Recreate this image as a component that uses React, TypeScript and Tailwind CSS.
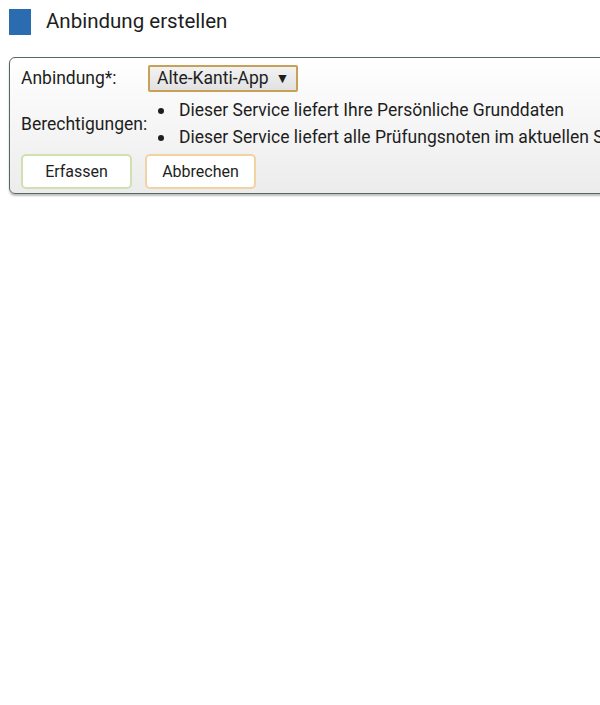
const App = () => {
  const rights = [
    'Dieser Service liefert Ihre Persönliche Grunddaten',
    'Dieser Service liefert alle Prüfungsnoten im aktuellen Semester',
  ];
  return (
    <div className="w-[600px] h-[705px] overflow-hidden bg-white font-['Roboto',sans-serif] text-[#1e1e1e]">
      <div className="flex items-center pl-[9px] pt-[8px] h-[35px]">
        <div className="w-[22px] h-[26px] bg-[#2b6cb0]" />
        <h1 className="ml-[15px] text-[20.5px] leading-none">Anbindung erstellen</h1>
      </div>
      <div className="ml-[9px] mt-[22px] w-max whitespace-nowrap rounded-[6px] border border-[#56695f] bg-gradient-to-b from-white to-[#ececec] pl-[11px] pr-4 pt-[7px] pb-[4px] text-[17.5px] shadow-[0_2px_2px_rgba(0,0,0,0.25)]">
        <div className="flex h-[27px] items-center">
          <span className="w-[127px]">Anbindung*:</span>
          <button className="flex h-[27px] items-center rounded-[2px] border-2 border-[#c9a057] bg-gradient-to-b from-[#f2f2f2] to-[#e2e2e2] px-[7px] text-[17.5px]">
            Alte-Kanti-App <span className="ml-[7px] text-[14px]">▼</span>
          </button>
        </div>
        <div className="flex items-center h-[60px] mt-[2px]">
          <span className="w-[127px]">Berechtigungen:</span>
          <ul className="leading-[27px]">
            {rights.map((r) => (
              <li key={r} className="flex items-center">
                <span className="ml-[10px] mr-[15px] h-[6px] w-[6px] rounded-full bg-[#1e1e1e]" />
                {r}
              </li>
            ))}
          </ul>
        </div>
        <div className="flex gap-[13px]">
          <button className="h-[35px] w-[111px] rounded-[5px] border-[2.5px] border-[#d0e0b0] bg-white text-[16px]">Erfassen</button>
          <button className="h-[35px] w-[111px] rounded-[5px] border-[2.5px] border-[#f3d2a2] bg-white text-[16px]">Abbrechen</button>
        </div>
      </div>
    </div>
  );
};

export default App;
